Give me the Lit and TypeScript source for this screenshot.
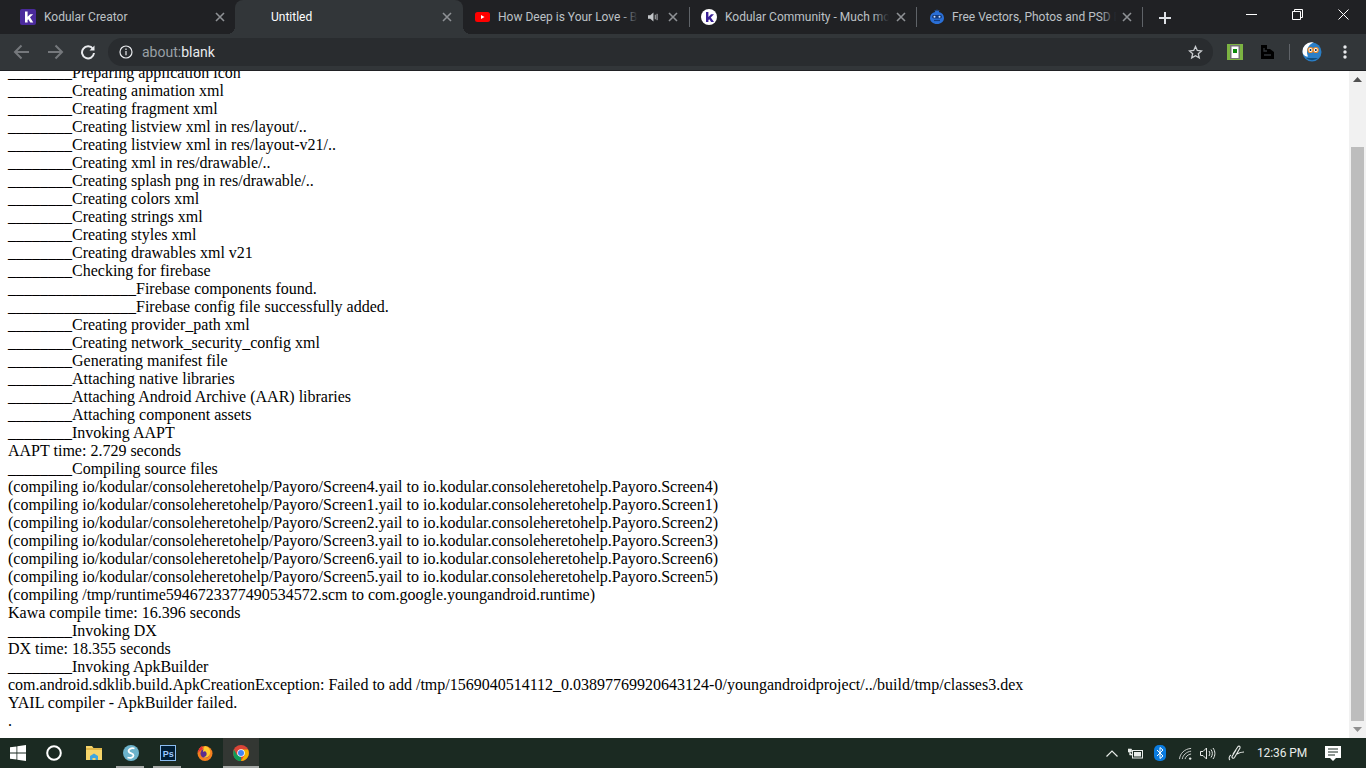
import { LitElement, html, css, svg } from "lit";
import { customElement } from "lit/decorators.js";

const U = "________";
const LINES = [
  U + "Preparing application icon",
  U + "Creating animation xml",
  U + "Creating fragment xml",
  U + "Creating listview xml in res/layout/..",
  U + "Creating listview xml in res/layout-v21/..",
  U + "Creating xml in res/drawable/..",
  U + "Creating splash png in res/drawable/..",
  U + "Creating colors xml",
  U + "Creating strings xml",
  U + "Creating styles xml",
  U + "Creating drawables xml v21",
  U + "Checking for firebase",
  U + U + "Firebase components found.",
  U + U + "Firebase config file successfully added.",
  U + "Creating provider_path xml",
  U + "Creating network_security_config xml",
  U + "Generating manifest file",
  U + "Attaching native libraries",
  U + "Attaching Android Archive (AAR) libraries",
  U + "Attaching component assets",
  U + "Invoking AAPT",
  "AAPT time: 2.729 seconds",
  U + "Compiling source files",
  "(compiling io/kodular/consoleheretohelp/Payoro/Screen4.yail to io.kodular.consoleheretohelp.Payoro.Screen4)",
  "(compiling io/kodular/consoleheretohelp/Payoro/Screen1.yail to io.kodular.consoleheretohelp.Payoro.Screen1)",
  "(compiling io/kodular/consoleheretohelp/Payoro/Screen2.yail to io.kodular.consoleheretohelp.Payoro.Screen2)",
  "(compiling io/kodular/consoleheretohelp/Payoro/Screen3.yail to io.kodular.consoleheretohelp.Payoro.Screen3)",
  "(compiling io/kodular/consoleheretohelp/Payoro/Screen6.yail to io.kodular.consoleheretohelp.Payoro.Screen6)",
  "(compiling io/kodular/consoleheretohelp/Payoro/Screen5.yail to io.kodular.consoleheretohelp.Payoro.Screen5)",
  "(compiling /tmp/runtime5946723377490534572.scm to com.google.youngandroid.runtime)",
  "Kawa compile time: 16.396 seconds",
  U + "Invoking DX",
  "DX time: 18.355 seconds",
  U + "Invoking ApkBuilder",
  "com.android.sdklib.build.ApkCreationException: Failed to add /tmp/1569040514112_0.03897769920643124-0/youngandroidproject/../build/tmp/classes3.dex",
  "YAIL compiler - ApkBuilder failed.",
  ".",
];

const close = svg`<svg class="x" width="10" height="10" viewBox="0 0 10 10"><path d="M1 1l8 8M9 1l-8 8" stroke="#8e9195" stroke-width="1.6" fill="none"/></svg>`;

const kSquare = html`<svg width="16" height="16" viewBox="0 0 16 16"><rect width="16" height="16" rx="2" fill="#4a2a9c"/><path d="M5 2.500h2.600v5.300l2.500-2.600h3.100L10 8.300 13.300 13.500h-3L8.300 10.200l-.7.700v2.600H5z" fill="#fff"/></svg>`;
const kCircle = html`<svg width="16" height="16" viewBox="0 0 16 16"><circle cx="8" cy="8" r="8" fill="#fff"/><path d="M5 3h2.400v5l2.600-2.800h3L9.800 8.400 13 13h-2.900L8.300 10.200 7.400 11v2H5z" fill="#3a2296"/></svg>`;
const yt = html`<svg width="15" height="10" viewBox="0 0 15 10"><rect width="15" height="10" rx="2.500" fill="#f00"/><path d="M6 3l3.500 2L6 7z" fill="#fff"/></svg>`;
const robot = html`<svg width="16" height="16" viewBox="0 0 16 16"><path d="M8 0l.6 2 1.900-.9-.7 1.900A6.500 6.500 0 0 1 15 9c0 3.500-3 6-7 6s-7-2.500-7-6a6.500 6.500 0 0 1 5.200-6L5.500 1.100 7.400 2z" fill="#2a6fd6"/><rect x="3" y="6" width="10" height="3.500" rx="1.700" fill="#143a7a"/><circle cx="5.500" cy="7.700" r="1" fill="#cfe0ff"/><circle cx="10.500" cy="7.700" r="1" fill="#cfe0ff"/><path d="M5 11.500h6" stroke="#143a7a" stroke-width="1.200"/></svg>`;

@customElement("app-root")
export class AppRoot extends LitElement {
  static styles = css`
    :host { display: block; width: 1366px; height: 768px; overflow: hidden; background: #fff; }
    * { box-sizing: border-box; }
    .page { display: flex; flex-direction: column; height: 768px; }
    .strip { height: 34px; background: #202124; display: flex; align-items: stretch; font: 12px "Roboto", "Noto Sans", sans-serif; color: #bdc1c6; position: relative; flex: none; }
    .tab { display: flex; align-items: center; position: relative; flex: none; height: 34px; }
    .tab .title { position: absolute; white-space: nowrap; overflow: hidden; top: 9px; line-height: 16px; }
    .fade::after { content: ""; position: absolute; right: 0; top: 0; bottom: 0; width: 16px; background: linear-gradient(to right, rgba(32,33,36,0), #202124); }
    .tab .ic { position: absolute; display: flex; }
    .tab .x { position: absolute; top: 12px; }
    .tab .sep { position: absolute; right: 0; top: 7px; width: 1px; height: 20px; background: #5f6368; }
    .active { background: #323639; border-radius: 8px 8px 0 0; color: #fff; }
    .active::before, .active::after { content: ""; position: absolute; bottom: 0; width: 8px; height: 8px; }
    .active::before { left: -8px; background: radial-gradient(circle at 0 0, transparent 8px, #323639 8px); }
    .active::after { right: -8px; background: radial-gradient(circle at 100% 0, transparent 8px, #323639 8px); }
    .plus { position: absolute; left: 1158px; top: 11px; display: flex; }
    .win { position: absolute; right: 0; top: 0; display: flex; }
    .win div { width: 46px; height: 28px; display: flex; align-items: center; justify-content: center; }
    .toolbar { height: 37px; background: #323639; display: flex; align-items: center; padding: 0 0 0 13px; flex: none; border-bottom: 1px solid #202124; }
    .nav { width: 18px; height: 16px; display: flex; margin-right: 14px; }
    .nav.back { margin-right: 15px; }
    .nav.reload { margin-right: 12px; }
    .omni { width: 1105px; height: 28px; border-radius: 14px; background: #292c2f; display: flex; align-items: center; padding: 0 10px 0 11px; font: 14px "Roboto", "Noto Sans", sans-serif; color: #9aa0a6; }
    .omni b { font-weight: 400; color: #e8eaed; }
    .omni .info { margin-right: 9px; display: flex; }
    .omni .star { margin-left: auto; display: flex; }
    .ext { display: flex; align-items: center; margin-left: 14px; }
    .ext .sep2 { width: 1px; height: 16px; background: #5f6368; margin: 0 12px 0 15px; }
    .doc-ic { margin-left: 18px; }
    .dots { margin-left: 21px; }
    .main { flex: 1; min-height: 0; display: flex; background: #fff; }
    .doc { flex: 1; overflow: hidden; font: 16px/18px "Liberation Serif", "Times New Roman", serif; color: #000; padding-left: 8px; }
    .doc div { white-space: pre; height: 18px; }
    .doc div:first-child { margin-top: -7px; }
    .scroll { width: 17px; background: #f1f1f1; display: flex; flex-direction: column; align-items: stretch; }
    .arrow { height: 17px; display: flex; align-items: center; justify-content: center; flex: none; }
    .track { flex: 1; padding: 59px 2px 0; display: flex; }
    .thumb { flex: 1; background: #bdbdbd; }
    .task { height: 30px; background: #1b2a22; display: flex; align-items: center; flex: none; position: relative; color: #fff; }
    .ti { width: 37px; height: 30px; display: flex; align-items: center; justify-content: center; position: relative; flex: none; }
    .ti.w36 { width: 36px; }
    .ti.folder { margin-left: 3px; }
    .ti.run::after { content: ""; position: absolute; left: 4px; right: 5px; bottom: 0; height: 2px; background: #a6a9a7; }
    .ti.cur { background: #333733; width: 36px; }
    .ti.cur::after { left: 0; right: 0; }
    .tray { margin-left: auto; display: flex; align-items: center; height: 30px; padding-right: 25px; }
    .clock { font: 12px "Roboto", "Noto Sans", sans-serif; width: 48px; display: flex; justify-content: center; margin: 0 19px 0 13px; color: #e8ece9; white-space: nowrap; letter-spacing: -.1px; }
    .caret { margin-right: 10px; }
    .batt { margin-right: 11px; }
    .bt { margin-right: 13px; }
    .wifi { margin-right: 7px; }
    .vol { margin-right: 12px; }
  `;

  render() {
    return html`<div class="page">
      ${this.renderStrip()}
      ${this.renderToolbar()}
      <div class="main">
        <div class="doc">${LINES.map((l) => html`<div>${l}</div>`)}</div>
        <div class="scroll">
          <div class="arrow"><svg width="9" height="5" viewBox="0 0 9 5"><path d="M4.500 0L9 5H0z" fill="#505050"/></svg></div>
          <div class="track"><div class="thumb"></div></div>
          <div class="arrow"><svg width="9" height="5" viewBox="0 0 9 5"><path d="M0 0h9L4.500 5z" fill="#8f8f8f"/></svg></div>
        </div>
      </div>
      ${this.renderTask()}
    </div>`;
  }

  tab(w: number, icon: unknown, iconX: number, iconY: number, title: string, titleX: number, titleW: number, xPos: number, sep: boolean, extra: unknown = "", active = false) {
    return html`<div class="tab ${active ? "active" : ""}" style="width:${w}px">
      ${icon ? html`<span class="ic" style="left:${iconX}px;top:${iconY}px">${icon}</span>` : ""}
      <span class="title ${active ? "" : "fade"}" style="left:${titleX}px;width:${titleW}px">${title}</span>
      ${extra}
      <span style="position:absolute;left:${xPos}px;top:0">${close}</span>
      ${sep ? html`<span class="sep"></span>` : ""}
    </div>`;
  }

  renderStrip() {
    const speaker = html`<svg style="position:absolute;left:185px;top:12px" width="10" height="10" viewBox="0 0 11 11"><path d="M0 3.500h2.500L6 .5v10L2.500 7.500H0z" fill="#c4c7ca"/><path d="M8 3v5M10 2v7" stroke="#c4c7ca" stroke-width="1"/></svg>`;
    return html`<div class="strip">
      ${this.tab(235, kSquare, 20, 9, "Kodular Creator", 44, 160, 215, false)}
      ${this.tab(228, "", 0, 0, "Untitled", 36, 160, 207, false, "", true)}
      ${this.tab(227, yt, 12, 12, "How Deep is Your Love - Bee Gees", 35, 140, 205, true, speaker)}
      ${this.tab(227, kCircle, 11, 9, "Kodular Community - Much more", 35, 164, 206, true)}
      ${this.tab(226, robot, 12, 9, "Free Vectors, Photos and PSD Downloads", 35, 164, 205, true)}
      <svg class="plus" width="14" height="14" viewBox="0 0 14 14"><path d="M7 1v12M1 7h12" stroke="#dee1e6" stroke-width="2"/></svg>
      <div class="win">
        <div><svg width="11" height="1" viewBox="0 0 11 1"><path d="M0 .5h11" stroke="#fff"/></svg></div>
        <div><svg width="11" height="11" viewBox="0 0 11 11" fill="none" stroke="#fff"><path d="M.5 2.500h8v8h-8zM2.500 2.500v-2h8v8h-2"/></svg></div>
        <div><svg width="11" height="11" viewBox="0 0 11 11"><path d="M.5.5l10 10M10.500.5l-10 10" stroke="#fff"/></svg></div>
      </div>
    </div>`;
  }

  renderToolbar() {
    return html`<div class="toolbar">
      <div class="nav back"><svg width="18" height="16" viewBox="0 0 18 16" fill="none" stroke="#75787c" stroke-width="2"><path d="M16 8H2M8.500 1.500L2 8l6.500 6.500"/></svg></div>
      <div class="nav"><svg width="18" height="16" viewBox="0 0 18 16" fill="none" stroke="#75787c" stroke-width="2"><path d="M2 8h14M9.500 1.500L16 8l-6.500 6.500"/></svg></div>
      <div class="nav reload"><svg width="18" height="16" viewBox="0 0 18 16" fill="none"><path d="M15 5A6 6 0 1 0 16 9" stroke="#e8eaed" stroke-width="2"/><path d="M16.500 1.500v5h-5z" fill="#e8eaed"/></svg></div>
      <div class="omni">
        <span class="info"><svg width="14" height="14" viewBox="0 0 14 14" fill="none" stroke="#e8eaed" stroke-width="1.200"><circle cx="7" cy="7" r="6"/><path d="M7 6v4.200M7 3.500v1.400"/></svg></span>
        <span>about:<b>blank</b></span>
        <span class="star"><svg width="15" height="15" viewBox="0 0 15 15" fill="none" stroke="#c8cbce" stroke-width="1.300"><path d="M7.500 1.500l1.800 4 4.200.4-3.200 2.800 1 4.200-3.800-2.200-3.800 2.200 1-4.200L1.500 5.900l4.200-.4z"/></svg></span>
      </div>
      <div class="ext">
        <svg width="16" height="16" viewBox="0 0 16 16"><rect width="16" height="16" fill="#7cb342"/><rect x="3" y="1" width="10" height="14" fill="#757575"/><rect x="4.500" y="2.500" width="7" height="11.500" fill="#fff"/><rect x="6" y="5" width="4" height="4" fill="#0a8a0a"/></svg>
        <svg class="doc-ic" width="13" height="14" viewBox="0 0 13 14"><path d="M0 0h6v4h3l4 3v7H0z" fill="#000"/><path d="M3 3v3h3M3 10h7" stroke="#32363a" stroke-width="1.300" fill="none"/></svg>
        <span class="sep2"></span>
        <svg width="20" height="20" viewBox="0 0 20 20"><circle cx="10" cy="10" r="9.500" fill="#2b7fc7"/><path d="M1 12A9 9 0 0 1 12 .6c-4 1-7 5-7 9 0 2 .5 4 1 5-2 0-4-1-5-2.600z" fill="#fff"/><circle cx="8.500" cy="8" r="3.100" fill="#e98b2a"/><circle cx="13.800" cy="8" r="3.100" fill="#e98b2a"/><circle cx="8.500" cy="8" r="1.900" fill="#fff"/><circle cx="13.800" cy="8" r="1.900" fill="#fff"/><circle cx="8.500" cy="8" r="1" fill="#123"/><circle cx="13.800" cy="8" r="1" fill="#123"/><path d="M4 16h12a9.500 9.500 0 0 1-12 0z" fill="#0f4f80"/></svg>
        <svg class="dots" width="4" height="14" viewBox="0 0 4 14" fill="#e8eaed"><circle cx="2" cy="2" r="1.700"/><circle cx="2" cy="7" r="1.700"/><circle cx="2" cy="12" r="1.700"/></svg>
      </div>
    </div>`;
  }

  renderTask() {
    return html`<div class="task">
      <div class="ti w36"><svg width="16" height="16" viewBox="0 0 16 16" fill="#fff"><path d="M0 2.300l6.500-.9v6.200H0zM7.300 1.300L16 0v7.600H7.300zM0 8.400h6.500v6.200L0 13.700zM7.300 8.400H16V16l-8.700-1.200z"/></svg></div>
      <div class="ti w36"><svg width="16" height="16" viewBox="0 0 16 16"><circle cx="8" cy="8" r="6.800" fill="none" stroke="#fff" stroke-width="2"/></svg></div>
      <div class="ti folder"><svg width="16" height="14" viewBox="0 0 16 14"><path d="M0 0h6l1.500 2H16v12H0z" fill="#f6d56b"/><path d="M0 2h16v2H0z" fill="#e0b84a"/><path d="M4 14v-4l4-2.500L12 10v4H9.500v-2h-3v2z" fill="#3fa6e0"/></svg></div>
      <div class="ti run"><svg width="16" height="16" viewBox="0 0 16 16"><circle cx="8" cy="8" r="8" fill="#6cb3cc"/><path d="M11.500 3.500C8 2.500 4.500 4.500 6 7c1.200 2 4.500 1 4.500 3.500 0 2-3 3-6 2" fill="none" stroke="#fff" stroke-width="1.800"/></svg></div>
      <div class="ti run"><svg width="16" height="16" viewBox="0 0 16 16"><rect x=".5" y=".5" width="15" height="15" fill="#001e36" stroke="#8abcf0"/><text x="2.800" y="11.800" font-family="Liberation Sans, sans-serif" font-size="9" font-weight="700" fill="#9cc8ff">Ps</text></svg></div>
      <div class="ti"><svg width="16" height="16" viewBox="0 0 16 16"><circle cx="8" cy="8.500" r="7.500" fill="#f5801f"/><circle cx="8" cy="8.500" r="4.500" fill="#5a2d91"/><path d="M8 1c4 1 6 4 5 8-1 3-5 5-7 3 3 0 4-2 3.500-4C9 6 7 6 6 7c0-2 1-5 2-6z" fill="#ffcb2e"/><path d="M1 8c0-3 2-6 4-7 0 2 1 3 1 3-2 1-4 2-5 4z" fill="#e62d3c"/></svg></div>
      <div class="ti run cur"><svg width="16" height="16" viewBox="0 0 16 16"><circle cx="8" cy="8" r="8" fill="#db4437"/><path d="M8 8L1 12a8 8 0 0 0 7 4z" fill="#0f9d58"/><path d="M1 4.500L4 10l4 6a8 8 0 0 1-7-11.500z" fill="#0f9d58"/><path d="M8 4.500h7A8 8 0 0 1 8 16l3.500-6z" fill="#f4b400"/><circle cx="8" cy="8" r="3.800" fill="#fff"/><circle cx="8" cy="8" r="3" fill="#4285f4"/></svg></div>
      <div class="tray">
        <svg class="caret" width="12" height="7" viewBox="0 0 12 7" fill="none" stroke="#e8ece9" stroke-width="1.200"><path d="M.5 6.500L6 1l5.500 5.500"/></svg>
        <svg class="batt" width="15" height="11" viewBox="0 0 15 11"><rect x="4.500" y="2.500" width="10" height="7.500" fill="none" stroke="#e8ece9"/><rect x="6" y="4" width="7" height="4.500" fill="#e8ece9"/><path d="M0 1h3.500v3H0zM1.700 4v3h3" fill="#e8ece9" stroke="#e8ece9" stroke-width=".6"/></svg>
        <svg class="bt" width="12" height="16" viewBox="0 0 12 16"><rect width="12" height="16" rx="5" fill="#0a7ce0"/><path d="M3 5l6 6-3 2.500v-11L9 5l-6 6" fill="none" stroke="#fff"/></svg>
        <svg class="wifi" width="14" height="13" viewBox="0 0 15 14" fill="none" stroke="#d5d8d6"><path d="M.5 13C1 7 6 2 13 1.500M3.500 13C4 9 8 5 13 4.500M6.500 13c.5-2.500 3-5 6.500-5.500"/><circle cx="12" cy="12.500" r="1.300" fill="#e8ece9" stroke="none"/></svg>
        <svg class="vol" width="16" height="13" viewBox="0 0 16 13" fill="none" stroke="#e8ece9"><path d="M.5 4.500h2.500L6.500 1v11L3 8.500H.5zM9 4c1 1.500 1 3.500 0 5M11 2.500c1.800 2.500 1.800 5.500 0 8M13 1c2.500 3.500 2.500 7.500 0 11"/></svg>
        <svg width="17" height="16" viewBox="0 0 17 16" fill="none" stroke="#e8ece9" stroke-width="1.100"><path d="M5 9l5-7.500c1-1 2.500 0 2 1.500L6.500 12.500c-1 1.500-3 .5-2.500-1L8 5M3 10c-2 1-2.500 4-1 5M9 9c2-1 3-2 7-2"/></svg>
        <span class="clock">12:36 PM</span>
        <svg width="16" height="15" viewBox="0 0 16 15"><path d="M0 0h16v12h-5l-3 3-3-3H0z" fill="#fff"/><path d="M3 3h10M3 6h10M3 9h7" stroke="#1b2a22"/></svg>
      </div>
    </div>`;
  }
}
